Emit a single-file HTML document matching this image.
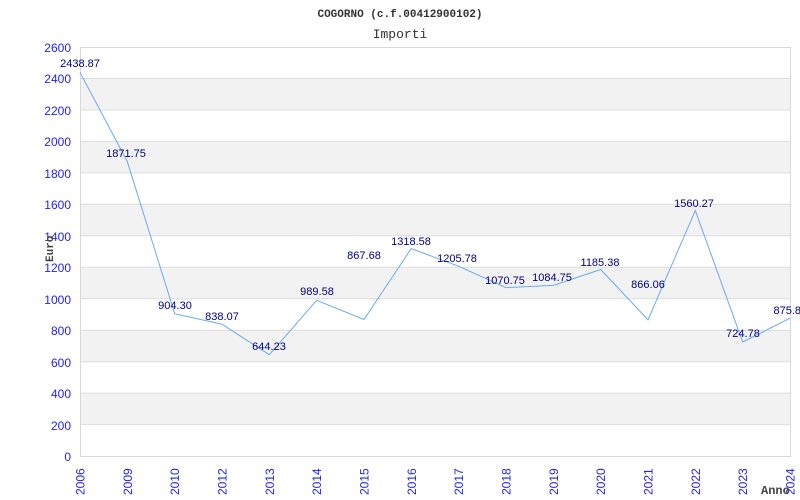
<!DOCTYPE html>
<html><head><meta charset="utf-8"><style>
body{margin:0;background:#fff;width:800px;height:500px;overflow:hidden}
</style></head><body>
<svg width="800" height="500" xmlns="http://www.w3.org/2000/svg" style="display:block">
<text x="400" y="17" text-anchor="middle" font-family="Liberation Mono, monospace" font-weight="bold" font-size="11" fill="#333">COGORNO (c.f.00412900102)</text>
<text x="400" y="38" text-anchor="middle" font-family="Liberation Mono, monospace" font-size="13" fill="#333">Importi</text>
<g fill="#f2f2f2">
<rect x="80" y="78.5" width="710" height="31.5"/>
<rect x="80" y="141.4" width="710" height="31.5"/>
<rect x="80" y="204.3" width="710" height="31.5"/>
<rect x="80" y="267.3" width="710" height="31.5"/>
<rect x="80" y="330.2" width="710" height="31.5"/>
<rect x="80" y="393.1" width="710" height="31.5"/>
</g>
<g stroke="#ddd" stroke-width="1">
<line x1="80" x2="790" y1="78.5" y2="78.5"/><line x1="80" x2="790" y1="110" y2="110"/>
<line x1="80" x2="790" y1="141.4" y2="141.4"/><line x1="80" x2="790" y1="172.9" y2="172.9"/>
<line x1="80" x2="790" y1="204.3" y2="204.3"/><line x1="80" x2="790" y1="235.8" y2="235.8"/>
<line x1="80" x2="790" y1="267.3" y2="267.3"/><line x1="80" x2="790" y1="298.7" y2="298.7"/>
<line x1="80" x2="790" y1="330.2" y2="330.2"/><line x1="80" x2="790" y1="361.7" y2="361.7"/>
<line x1="80" x2="790" y1="393.1" y2="393.1"/><line x1="80" x2="790" y1="424.6" y2="424.6"/>
</g>
<rect x="80.5" y="47.5" width="710" height="409" fill="none" stroke="#d8d8d8"/>
<g font-family="Liberation Sans, sans-serif" font-size="12" fill="#2222ee" text-anchor="end">
<text x="71" y="52">2600</text><text x="71" y="83">2400</text><text x="71" y="115">2200</text>
<text x="71" y="146">2000</text><text x="71" y="178">1800</text><text x="71" y="209">1600</text>
<text x="71" y="241">1400</text><text x="71" y="272">1200</text><text x="71" y="304">1000</text>
<text x="71" y="335">800</text><text x="71" y="367">600</text><text x="71" y="398">400</text>
<text x="71" y="430">200</text><text x="71" y="461">0</text>
</g>
<g font-family="Liberation Sans, sans-serif" font-size="12" fill="#2222ee">
<text transform="translate(84.5,495) rotate(-90)">2006</text>
<text transform="translate(131.8,495) rotate(-90)">2009</text>
<text transform="translate(179.2,495) rotate(-90)">2010</text>
<text transform="translate(226.5,495) rotate(-90)">2012</text>
<text transform="translate(273.8,495) rotate(-90)">2013</text>
<text transform="translate(321.2,495) rotate(-90)">2014</text>
<text transform="translate(368.5,495) rotate(-90)">2015</text>
<text transform="translate(415.8,495) rotate(-90)">2016</text>
<text transform="translate(463.2,495) rotate(-90)">2017</text>
<text transform="translate(510.5,495) rotate(-90)">2018</text>
<text transform="translate(557.8,495) rotate(-90)">2019</text>
<text transform="translate(605.2,495) rotate(-90)">2020</text>
<text transform="translate(652.5,495) rotate(-90)">2021</text>
<text transform="translate(699.8,495) rotate(-90)">2022</text>
<text transform="translate(747.2,495) rotate(-90)">2023</text>
<text transform="translate(794.5,495) rotate(-90)">2024</text>
</g>
<text transform="translate(53,262) rotate(-90)" font-family="Liberation Mono, monospace" font-weight="bold" font-size="11" fill="#444">Euro</text>
<text x="761" y="494" font-family="Liberation Mono, monospace" font-weight="bold" font-size="12" fill="#444">Anno</text>
<polyline fill="none" stroke="#6aaaee" stroke-width="1" points="80,72.3 127.3,161.6 174.7,313.7 222,324.2 269.3,354.7 316.7,300.3 364,319.5 411.3,248.6 458.7,266.3 506,287.6 553.3,285.4 600.7,269.5 648,319.8 695.3,210.6 742.7,342 790,318.2"/>
<g font-family="Liberation Sans, sans-serif" font-size="11" fill="#000080" text-anchor="middle">
<text x="80" y="67">2438.87</text>
<text x="126" y="157">1871.75</text>
<text x="175" y="309">904.30</text>
<text x="222" y="320">838.07</text>
<text x="269" y="350">644.23</text>
<text x="317" y="295">989.58</text>
<text x="364" y="259">867.68</text>
<text x="411" y="245">1318.58</text>
<text x="457" y="262">1205.78</text>
<text x="505" y="284">1070.75</text>
<text x="552" y="281">1084.75</text>
<text x="600" y="266">1185.38</text>
<text x="648" y="288">866.06</text>
<text x="694" y="207">1560.27</text>
<text x="743" y="337">724.78</text>
<text x="801" y="314" text-anchor="end">875.8</text>
</g>
</svg>
</body></html>
